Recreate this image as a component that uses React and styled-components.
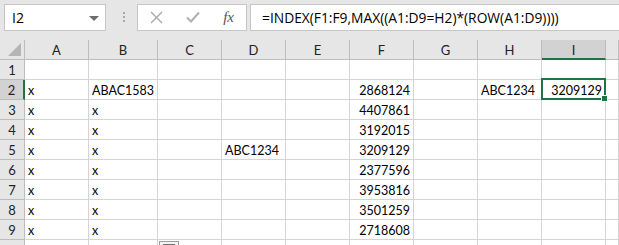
import React from "react";
import styled, { createGlobalStyle } from "styled-components";

const GlobalStyle = createGlobalStyle`
    html, body {
        margin: 0;
        padding: 0;
        background: #ffffff;
        overflow: hidden;
    }
`;

const GREEN = "#217346";
const GRID = "#d4d4d4";
const HEAD_LINE = "#bcbcbc";
const CELL_FONT = `"Lato", "Liberation Sans", sans-serif`;

// widths include the 1px right gridline; J is only partly in view
const COLS = [
    { key: "A", w: 64 },
    { key: "B", w: 69 },
    { key: "C", w: 64 },
    { key: "D", w: 64 },
    { key: "E", w: 64 },
    { key: "F", w: 64 },
    { key: "G", w: 64 },
    { key: "H", w: 64 },
    { key: "I", w: 64 },
    { key: "J", w: 13, hidden: true },
];

const DATA = {
    2: { A: "x", B: "ABAC1583", F: 2868124, H: "ABC1234", I: 3209129 },
    3: { A: "x", B: "x", F: 4407861 },
    4: { A: "x", B: "x", F: 3192015 },
    5: { A: "x", B: "x", D: "ABC1234", F: 3209129 },
    6: { A: "x", B: "x", F: 2377596 },
    7: { A: "x", B: "x", F: 3953816 },
    8: { A: "x", B: "x", F: 3501259 },
    9: { A: "x", B: "x", F: 2718608 },
};

const Sheet = styled.div`
    position: relative;
    width: 619px;
    height: 245px;
    overflow: hidden;
    background: #e6e6e6;
`;

const Toolbar = styled.div`
    display: flex;
    align-items: center;
    height: 40px;
    padding: 0 0 6px 4px;
    box-sizing: border-box;
    background: #e6e6e6;
`;

const Box = styled.div`
    display: flex;
    align-items: center;
    height: 27px;
    box-sizing: border-box;
    background: #ffffff;
    border: 1px solid #c6c6c6;
    font-family: "Open Sans", "Noto Sans", sans-serif;
    font-size: 13.8px;
    color: #000;
`;

const NameBox = styled(Box)`
    width: 102px;
    padding: 0 6px 0 7px;
    justify-content: space-between;
    font-size: 14px;
`;

const Caret = styled.span`
    width: 0;
    height: 0;
    border-left: 5px solid transparent;
    border-right: 5px solid transparent;
    border-top: 5px solid #6d6d6d;
    margin-top: 2px;
`;

const Grip = styled.div`
    display: flex;
    flex-direction: column;
    gap: 2px;
    margin: 0 12px 0 17px;
    span {
        width: 2px;
        height: 2px;
        background: #a8a8a8;
    }
`;

const ButtonBox = styled(Box)`
    width: 110px;
    padding: 0 10px 0 12px;
    justify-content: space-between;
`;

const Fx = styled.span`
    font-family: "Liberation Serif", "DejaVu Serif", serif;
    font-style: italic;
    font-size: 15px;
    color: #555;
    margin-right: 2px;
`;

const FormulaBox = styled(Box)`
    flex: 1;
    margin-left: 3px;
    padding-left: 11px;
    border-right: none;
    white-space: nowrap;
`;

const Row = styled.div`
    display: flex;
    height: 20px;
`;

const Corner = styled.div`
    position: relative;
    width: 25px;
    flex: none;
    box-sizing: border-box;
    border-right: 1px solid ${HEAD_LINE};
    border-bottom: 1px solid ${HEAD_LINE};
    background: #e6e6e6;
    &::after {
        content: "";
        position: absolute;
        right: 3px;
        bottom: 3px;
        width: 0;
        height: 0;
        border-left: 13px solid transparent;
        border-bottom: 13px solid #b5b5b5;
    }
`;

const ColHead = styled.div`
    width: ${(p) => p.$w}px;
    flex: none;
    box-sizing: border-box;
    display: flex;
    align-items: center;
    justify-content: center;
    background: ${(p) => (p.$active ? "#d2d2d2" : "#e6e6e6")};
    border-right: 1px solid ${HEAD_LINE};
    border-bottom: ${(p) => (p.$active ? `2px solid ${GREEN}` : `1px solid ${HEAD_LINE}`)};
    font-family: ${CELL_FONT};
    font-size: 13px;
    line-height: 18px;
    padding-top: ${(p) => (p.$active ? 1 : 0)}px;
    color: #222;
`;

const RowHead = styled.div`
    width: 25px;
    flex: none;
    box-sizing: border-box;
    display: flex;
    align-items: center;
    justify-content: center;
    background: ${(p) => (p.$active ? "#d2d2d2" : "#e6e6e6")};
    border-right: ${(p) => (p.$active ? `2px solid ${GREEN}` : `1px solid ${HEAD_LINE}`)};
    border-bottom: 1px solid ${HEAD_LINE};
    font-family: ${CELL_FONT};
    font-size: 13px;
    line-height: 18px;
    padding-top: 1px;
    color: #222;
`;

const Cell = styled.div`
    width: ${(p) => p.$w}px;
    flex: none;
    box-sizing: border-box;
    background: #ffffff;
    border-right: 1px solid ${GRID};
    border-bottom: 1px solid ${GRID};
    padding: 2px 3px 0 3px;
    font-family: ${CELL_FONT};
    font-size: 12.5px;
    line-height: 17px;
    color: #000;
    text-align: ${(p) => (p.$num ? "right" : "left")};
    white-space: nowrap;
`;

const Selection = styled.div`
    position: absolute;
    left: 541px;
    top: 78px;
    width: 65px;
    height: 22px;
    box-sizing: border-box;
    border: 2px solid ${GREEN};
    &::after {
        content: "";
        position: absolute;
        right: -4px;
        bottom: -4px;
        width: 5px;
        height: 5px;
        background: ${GREEN};
        border: 1px solid #fff;
    }
`;

const PasteTag = styled.div`
    position: absolute;
    left: 159px;
    top: 241px;
    width: 20px;
    height: 14px;
    box-sizing: border-box;
    border: 1px solid #9a9a9a;
    background: #f4f4f4;
    &::after {
        content: "";
        position: absolute;
        left: 3px;
        top: 2px;
        width: 12px;
        height: 3px;
        background: #6e6e6e;
    }
`;

function XIcon() {
    return (
        <svg width="13" height="13" viewBox="0 0 13 13">
            <path d="M1 1L12 12M12 1L1 12" stroke="#a6a6a6" strokeWidth="1.3" fill="none" />
        </svg>
    );
}

function CheckIcon() {
    return (
        <svg width="14" height="12" viewBox="0 0 14 12">
            <path d="M1 6.5L5 10.5L13 1.5" stroke="#b0b0b0" strokeWidth="2" fill="none" />
        </svg>
    );
}

export default function App() {
    // row 10 is cut by the bottom edge, its number lies below the view
    const rows = [1, 2, 3, 4, 5, 6, 7, 8, 9, 10];
    return (
        <Sheet>
            <GlobalStyle />
            <Toolbar>
                <NameBox>
                    <span>I2</span>
                    <Caret />
                </NameBox>
                <Grip>
                    <span />
                    <span />
                    <span />
                </Grip>
                <ButtonBox>
                    <XIcon />
                    <CheckIcon />
                    <Fx>fx</Fx>
                </ButtonBox>
                <FormulaBox>=INDEX(F1:F9,MAX((A1:D9=H2)*(ROW(A1:D9))))</FormulaBox>
            </Toolbar>
            <Row>
                <Corner />
                {COLS.map((c) => (
                    <ColHead key={c.key} $w={c.w} $active={c.key === "I"}>
                        {c.hidden ? null : c.key}
                    </ColHead>
                ))}
            </Row>
            {rows.map((r) => (
                <Row key={r}>
                    <RowHead $active={r === 2}>{r < 10 ? r : null}</RowHead>
                    {COLS.map((c) => {
                        const v = DATA[r] && DATA[r][c.key];
                        return (
                            <Cell key={c.key} $w={c.w} $num={typeof v === "number"}>
                                {v}
                            </Cell>
                        );
                    })}
                </Row>
            ))}
            <Selection />
            <PasteTag />
        </Sheet>
    );
}
